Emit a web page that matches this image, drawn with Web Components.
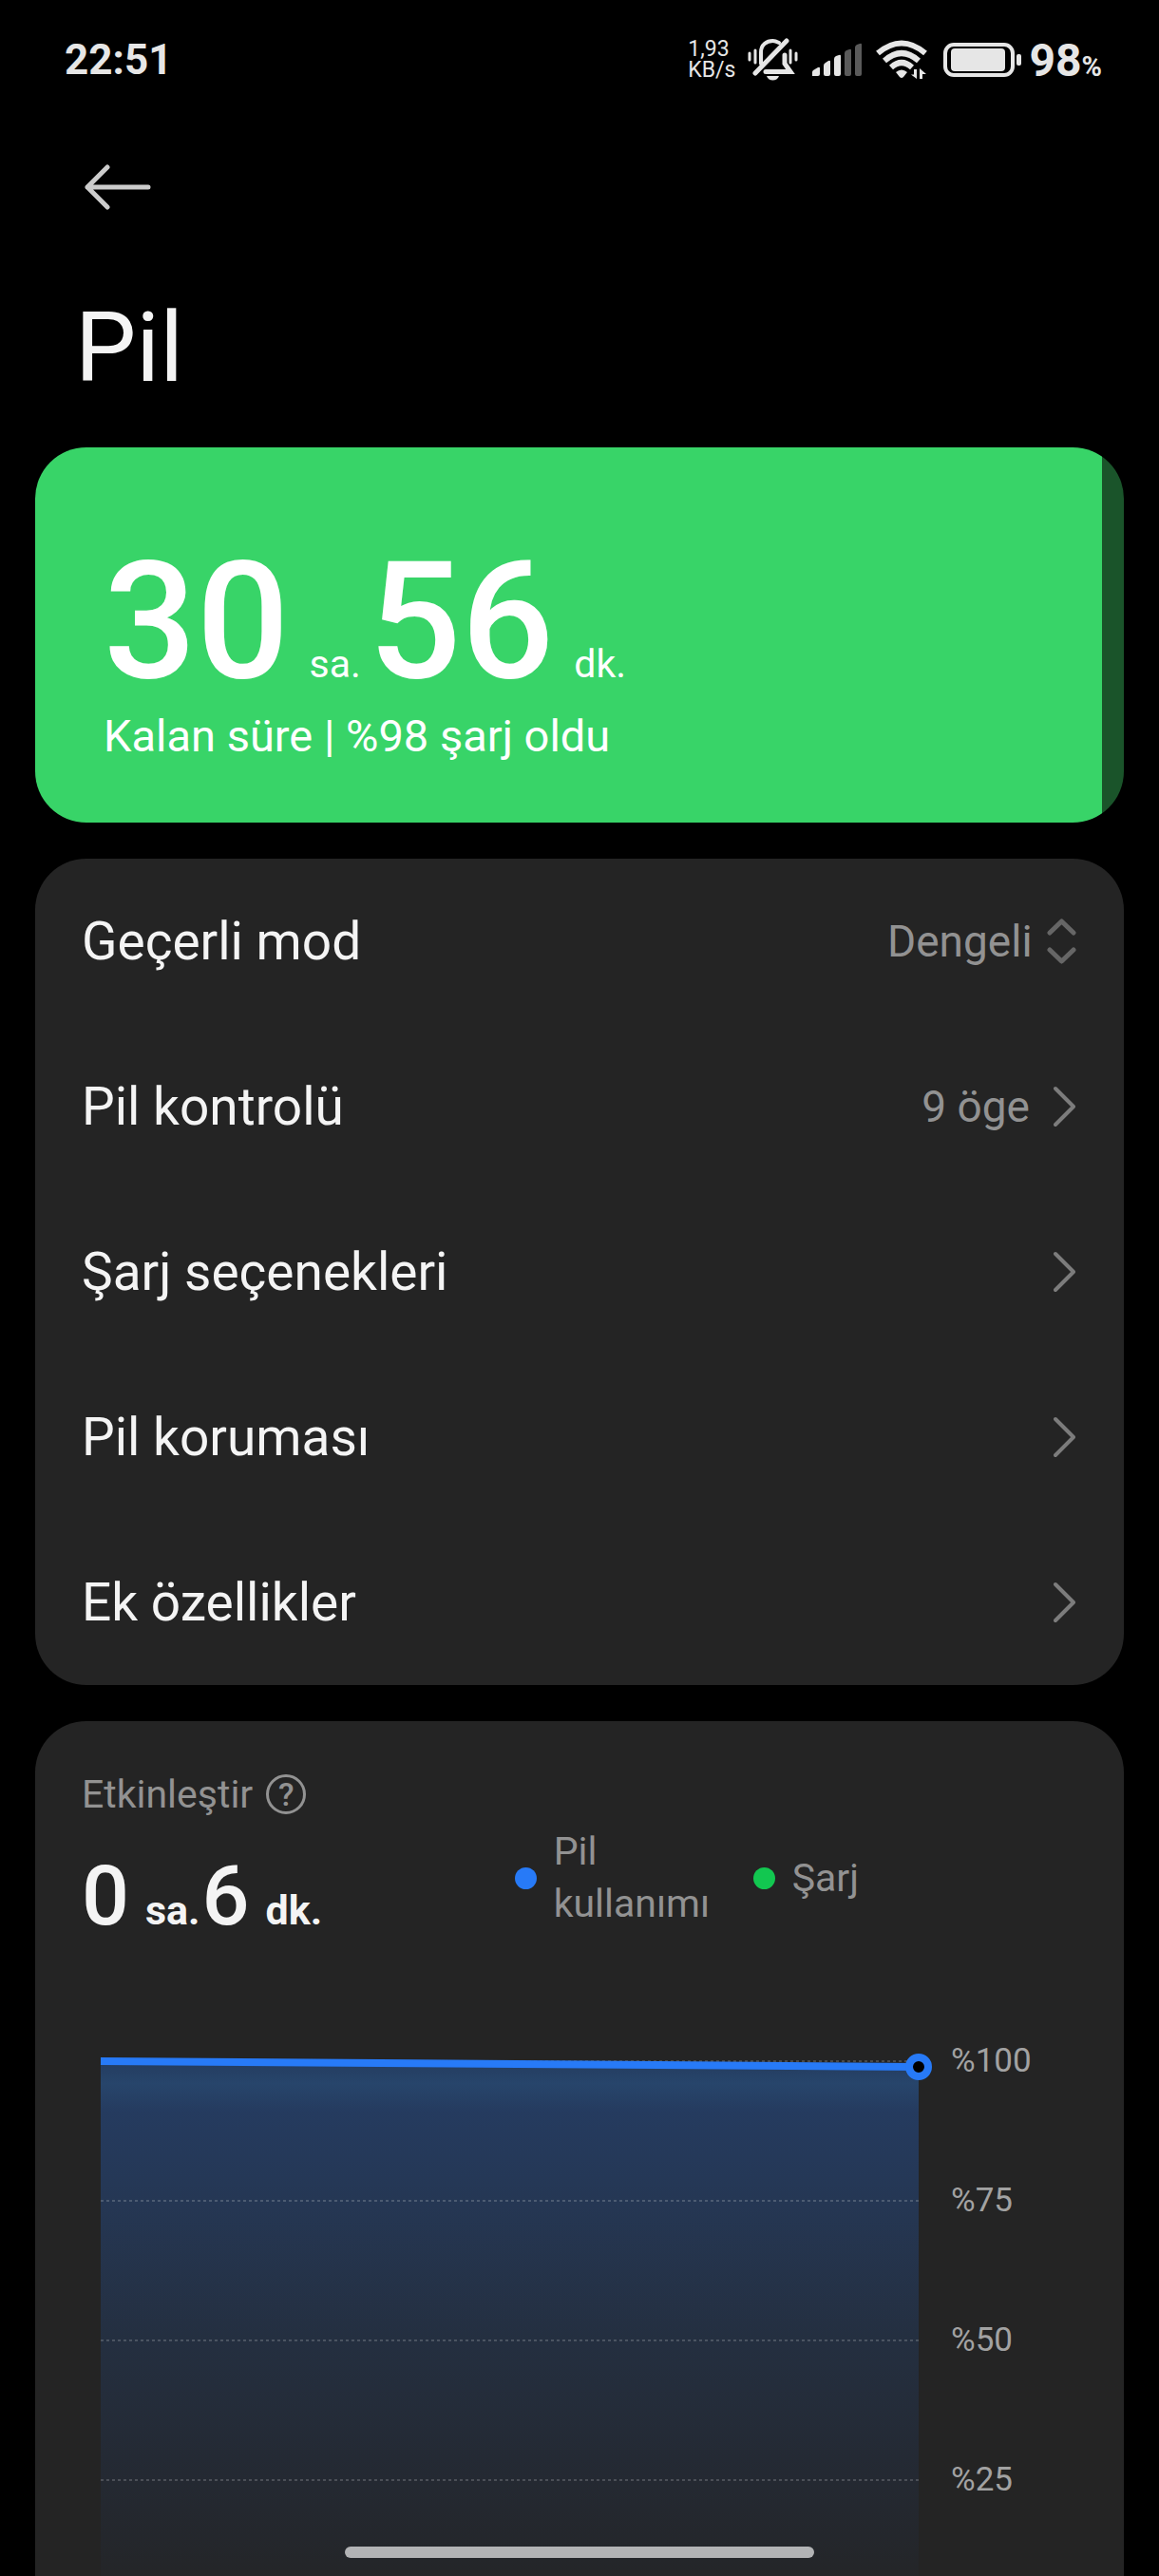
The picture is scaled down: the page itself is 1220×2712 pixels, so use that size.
<!DOCTYPE html>
<html lang="tr">
<head>
<meta charset="utf-8">
<meta name="viewport" content="width=device-width, initial-scale=1">
<title>Pil</title>
<style>
    body {
        margin: 0;
        background: #000;
        color: #f4f4f4;
        font-family: Roboto, "Noto Sans", sans-serif;
    }
</style>
</head>
<body>
<battery-app>
    <status-bar slot="status" time="22:51" speed="1,93" unit="KB/s" level="98"></status-bar>
    <page-header>Pil</page-header>
    <battery-card level="98" hours="30" minutes="56">Kalan süre | %98 şarj oldu</battery-card>
    <settings-card>
        <mode-row label="Geçerli mod" value="Dengeli"></mode-row>
        <link-row value="9 öge">Pil kontrolü</link-row>
        <link-row>Şarj seçenekleri</link-row>
        <link-row>Pil koruması</link-row>
        <link-row>Ek özellikler</link-row>
    </settings-card>
    <usage-card label="Etkinleştir" hours="0" minutes="6">
        <legend-item slot="legend" color="#277af7">Pil kullanımı</legend-item>
        <legend-item slot="legend" color="#12c750">Şarj</legend-item>
        <battery-chart></battery-chart>
    </usage-card>
</battery-app>

<script>
class BatteryApp extends HTMLElement {
    constructor () {
        super()
        this.attachShadow({mode: "open"}).innerHTML =
        `
        <style>
            :host {
                display: flex;
                flex-direction: column;
                height: 100vh;
                overflow: hidden;
            }

            main {
                display: flex;
                flex-direction: column;
                gap: 38px;
                flex: 1;
                min-height: 0;
                padding: 0 37px;
                overflow-y: auto;
                scrollbar-width: none;
            }

            .home {
                position: fixed;
                bottom: 19px;
                left: 50%;
                width: 494px;
                height: 12px;
                margin-left: -247px;
                border-radius: 6px;
                background: #b2b3b5;
            }
        </style>
        <slot name="status"></slot>
        <main><slot></slot></main>
        <div class="home"></div>
        `
    }
}

class StatusBar extends HTMLElement {
    constructor () {
        super()
        this.attachShadow({mode: "open"})
    }

    connectedCallback () {
        this.shadowRoot.innerHTML =
        `
        <style>
            :host {
                display: flex;
                align-items: center;
                justify-content: space-between;
                flex: none;
                height: 126px;
                padding: 0 60px 0 68px;
                box-sizing: border-box;
                color: #e6e6e6;
                font-weight: 700;
            }

            .time {
                font-size: 44px;
            }

            .right {
                display: flex;
                align-items: center;
            }

            .speed {
                margin-right: 13px;
                font-size: 23px;
                font-weight: 400;
                line-height: 22px;
            }

            .bell, .signal {
                margin-right: 15px;
            }

            .wifi {
                margin-right: 17px;
            }

            .battery {
                margin-right: 8px;
            }

            .level {
                font-size: 48px;
            }

            small {
                font-size: 29px;
            }

            svg {
                display: block;
            }
        </style>
        <span class="time">${this.getAttribute("time")}</span>
        <div class="right">
            <div class="speed">${this.getAttribute("speed")}<br>${this.getAttribute("unit")}</div>
            <svg class="bell" width="53" height="46" viewBox="0 0 53 46" fill="none" stroke="#e6e6e6" stroke-width="4" stroke-linecap="round">
                <path d="M14 27V15C14 7 20 3 26.500 3C29 3 31 4 33 5"/>
                <path d="M8 37L41 3" stroke-width="5"/>
                <path d="M19 35.500H45L39 27V18" stroke-width="5"/>
                <path d="M2 16V23M8 13V26M45 13V26M51 16V23" stroke-width="3"/>
                <path d="M20 40H33C31 46 22 46 20 40Z" fill="#e6e6e6" stroke="none"/>
            </svg>
            <svg class="signal" width="52" height="36" viewBox="0 0 52 36" fill="#e6e6e6">
                <path d="M0 35V31Q0 30 1 29L6 26Q8 25 8 27V33Q8 35 6 35Z"/>
                <path d="M12 33V24Q12 22 14 21L17 19Q19 18 19 20V33Q19 35 17 35H14Q12 35 12 33Z"/>
                <path d="M23 33V17Q23 15 25 14L28 13Q30 12 30 14V33Q30 35 28 35H25Q23 35 23 33Z"/>
                <path fill="#5a5a5a" d="M34 33V11Q34 9 36 8L39 7Q41 6 41 8V33Q41 35 39 35H36Q34 35 34 33ZM45 33V5Q45 3 47 2L50 1Q52 0 52 2V33Q52 35 50 35H47Q45 35 45 33Z"/>
            </svg>
            <svg class="wifi" width="54" height="42" viewBox="0 0 54 42" fill="none" stroke="#e6e6e6" stroke-width="6">
                <path d="M2 14Q27 -7 52 14"/>
                <path d="M9 22Q27 6 45 22"/>
                <path d="M16 29Q27 19 38 29"/>
                <path d="M21 34Q27 29 33 34L29 39Q27 41 25 39Z" fill="#e6e6e6" stroke="none"/>
                <path d="M43 31V41L37 36.500H40V31ZM46 41V30L53 36H49V41Z" fill="#e6e6e6" stroke="none"/>
            </svg>
            <svg class="battery" width="82" height="36" viewBox="0 0 82 36">
                <rect x="2" y="2" width="71" height="32" rx="9" fill="none" stroke="#e6e6e6" stroke-width="4"/>
                <rect x="8" y="6" width="57" height="24" rx="4" fill="#e6e6e6"/>
                <rect x="77" y="12" width="5" height="12" rx="2" fill="#e6e6e6"/>
            </svg>
            <span class="level">${this.getAttribute("level")}<small>%</small></span>
        </div>
        `
    }
}

class PageHeader extends HTMLElement {
    constructor () {
        super()
        this.attachShadow({mode: "open"}).innerHTML =
        `
        <style>
            :host {
                display: block;
                padding: 47px 42px 7px;
            }

            button {
                display: block;
                margin: 0 0 85px 10px;
                padding: 0;
                border: 0;
                background: none;
            }

            svg {
                display: block;
            }

            h1 {
                margin: 0;
                font-size: 102px;
                font-weight: 400;
                line-height: 120px;
            }
        </style>
        <button aria-label="Geri">
            <svg width="70" height="48" viewBox="0 0 70 48" fill="none" stroke="#ccc" stroke-width="5" stroke-linecap="round" stroke-linejoin="round">
                <path d="M24 3L3 24L24 45M3 24H67"/>
            </svg>
        </button>
        <h1><slot></slot></h1>
        `
    }
}

class TimeSpan extends HTMLElement {
    constructor () {
        super()
        this.attachShadow({mode: "open"})
    }

    connectedCallback () {
        this.shadowRoot.innerHTML =
        `
        <style>
            :host {
                display: flex;
                align-items: baseline;
                font-size: var(--number-size);
                line-height: 1;
                font-weight: 500;
            }

            b {
                font-weight: inherit;
            }

            span {
                margin: 0 var(--after-unit) 0 var(--before-unit);
                font-size: var(--unit-size);
                font-weight: var(--unit-weight);
            }
        </style>
        <b>${this.getAttribute("hours")}</b><span>sa.</span>
        <b>${this.getAttribute("minutes")}</b><span>dk.</span>
        `
    }
}

class BatteryCard extends HTMLElement {
    constructor () {
        super()
        this.attachShadow({mode: "open"})
    }

    connectedCallback () {
        const level = this.getAttribute("level")
        this.shadowRoot.innerHTML =
        `
        <style>
            :host {
                display: block;
                padding: 97px 72px 63px;
                border-radius: 54px;
                background: linear-gradient(to right, #38d468 ${level}%, #1a542a ${level}%);
                color: #fff;
            }

            time-span {
                --number-size: 172px;
                --unit-size: 41px;
                --unit-weight: 400;
                --before-unit: 21px;
                --after-unit: 8px;
            }

            p {
                margin: 7px 0 0;
                font-size: 47px;
                line-height: 56px;
            }
        </style>
        <time-span hours="${this.getAttribute("hours")}" minutes="${this.getAttribute("minutes")}"></time-span>
        <p><slot></slot></p>
        `
    }
}

class SettingsCard extends HTMLElement {
    constructor () {
        super()
        this.attachShadow({mode: "open"}).innerHTML =
        `
        <style>
            :host {
                display: block;
                border-radius: 54px;
                background: #242424;
            }
        </style>
        <slot></slot>
        `
    }
}

class ModeRow extends HTMLElement {
    constructor () {
        super()
        this.attachShadow({mode: "open"})
    }

    connectedCallback () {
        this.shadowRoot.innerHTML =
        `
        <style>
            :host {
                display: flex;
                align-items: center;
                height: 174px;
                padding: 0 50px 0 49px;
            }

            label {
                flex: 1;
                font-size: 55px;
            }

            select {
                appearance: none;
                margin: 0 15px 0 0;
                padding: 0;
                border: 0;
                background: none;
                color: #929292;
                font: inherit;
                font-size: 46px;
            }
        </style>
        <label for="mode">${this.getAttribute("label")}</label>
        <select id="mode"><option>${this.getAttribute("value")}</option></select>
        <svg width="31" height="50" viewBox="0 0 31 50" fill="none" stroke="#666" stroke-width="5" stroke-linecap="round" stroke-linejoin="round">
            <path d="M3 16L15.500 4L28 16M3 34L15.500 46L28 34"/>
        </svg>
        `
    }
}

class LinkRow extends HTMLElement {
    constructor () {
        super()
        this.attachShadow({mode: "open"})
    }

    connectedCallback () {
        this.shadowRoot.innerHTML =
        `
        <style>
            :host {
                display: block;
            }

            a {
                display: flex;
                align-items: center;
                height: 174px;
                padding: 0 50px 0 49px;
                color: inherit;
                text-decoration: none;
            }

            .label {
                flex: 1;
                font-size: 55px;
            }

            .value {
                margin-right: 25px;
                color: #929292;
                font-size: 46px;
            }
        </style>
        <a href="#">
            <span class="label"><slot></slot></span>
            <span class="value">${this.getAttribute("value") || ""}</span>
            <svg width="24" height="44" viewBox="0 0 24 44" fill="none" stroke="#7c7c7c" stroke-width="4" stroke-linecap="round" stroke-linejoin="round">
                <path d="M2 3L21 22L2 41"/>
            </svg>
        </a>
        `
    }
}

class UsageCard extends HTMLElement {
    constructor () {
        super()
        this.attachShadow({mode: "open"})
    }

    connectedCallback () {
        this.shadowRoot.innerHTML =
        `
        <style>
            :host {
                display: block;
                padding: 53px 0 50px;
                border-radius: 54px;
                background: #242424;
            }

            header {
                display: grid;
                grid-template-columns: 10fr 13fr;
                align-items: end;
                padding: 0 49px;
            }

            .label {
                display: flex;
                align-items: center;
                gap: 14px;
                margin-bottom: 39px;
                color: #929292;
                font-size: 41px;
                line-height: 48px;
            }

            button {
                width: 42px;
                height: 42px;
                padding: 0;
                border: 3px solid #929292;
                border-radius: 50%;
                background: none;
                color: inherit;
                font: inherit;
                font-size: 34px;
                font-weight: 500;
                line-height: 36px;
            }

            time-span {
                --number-size: 88px;
                --unit-size: 43px;
                --unit-weight: 700;
                --before-unit: 17px;
                --after-unit: 2px;
            }

            .legend {
                display: flex;
                gap: 42px;
                padding-bottom: 8px;
            }
        </style>
        <header>
            <div>
                <div class="label">${this.getAttribute("label")} <button aria-label="Bilgi">?</button></div>
                <time-span hours="${this.getAttribute("hours")}" minutes="${this.getAttribute("minutes")}"></time-span>
            </div>
            <div class="legend"><slot name="legend"></slot></div>
        </header>
        <slot></slot>
        `
    }
}

class LegendItem extends HTMLElement {
    constructor () {
        super()
        this.attachShadow({mode: "open"})
    }

    connectedCallback () {
        this.shadowRoot.innerHTML =
        `
        <style>
            :host {
                display: flex;
                align-items: center;
                gap: 18px;
                max-width: 209px;
                color: #929292;
                font-size: 41px;
                line-height: 55px;
            }

            i {
                flex: none;
                width: 23px;
                height: 23px;
                border-radius: 50%;
                background: ${this.getAttribute("color")};
            }
        </style>
        <i></i>
        <span><slot></slot></span>
        `
    }
}

class BatteryChart extends HTMLElement {
    constructor () {
        super()
        // 147 units of height for every 25 percent
        const lines = [0, 147, 294, 441].map(y => `<line x1="0" y1="${y}" x2="861" y2="${y}"/>`).join("")
        const labels = ["%100", "%75", "%50", "%25"].map(text => `<span>${text}</span>`).join("")

        this.attachShadow({mode: "open"}).innerHTML =
        `
        <style>
            :host {
                display: grid;
                grid-template-columns: 1fr 182px;
                gap: 34px;
                margin-top: 130px;
                padding-left: 69px;
            }

            .plot {
                position: relative;
                height: 588px;
            }

            svg {
                display: block;
                width: 100%;
                height: 100%;
                overflow: visible;
            }

            .grid {
                stroke: #fff;
                stroke-opacity: .18;
                stroke-width: 2;
                stroke-dasharray: 3 3;
            }

            line, .level {
                vector-effect: non-scaling-stroke;
            }

            .knob {
                position: absolute;
                top: -8px;
                right: -14px;
                width: 12px;
                height: 12px;
                border: 8px solid #277af7;
                border-radius: 50%;
                background: #000;
            }

            .labels {
                margin-top: -20px;
                color: #a2a2a2;
                font-size: 35px;
                line-height: 40px;
            }

            .labels span {
                display: block;
                height: 147px;
            }
        </style>
        <div class="plot">
            <svg viewBox="0 0 861 588" preserveAspectRatio="none">
                <defs>
                    <linearGradient id="fill" x1="0" y1="0" x2="0" y2="1">
                        <stop offset="0" stop-color="#243c60"/>
                        <stop offset=".04" stop-color="#27456b"/>
                        <stop offset=".09" stop-color="#253b5f"/>
                        <stop offset=".25" stop-color="#253754"/>
                        <stop offset=".5" stop-color="#242f40"/>
                        <stop offset=".75" stop-color="#242932"/>
                        <stop offset="1" stop-color="#242424"/>
                    </linearGradient>
                </defs>
                <path d="M0 0L861 6V588H0Z" fill="url(#fill)"/>
                <g class="grid">${lines}</g>
                <path class="level" d="M0 0L861 6" stroke="#277af7" stroke-width="8"/>
            </svg>
            <div class="knob"></div>
        </div>
        <div class="labels">${labels}</div>
        `
    }
}

customElements.define("battery-app", BatteryApp)
customElements.define("status-bar", StatusBar)
customElements.define("page-header", PageHeader)
customElements.define("time-span", TimeSpan)
customElements.define("battery-card", BatteryCard)
customElements.define("settings-card", SettingsCard)
customElements.define("mode-row", ModeRow)
customElements.define("link-row", LinkRow)
customElements.define("usage-card", UsageCard)
customElements.define("legend-item", LegendItem)
customElements.define("battery-chart", BatteryChart)
</script>
</body>
</html>
